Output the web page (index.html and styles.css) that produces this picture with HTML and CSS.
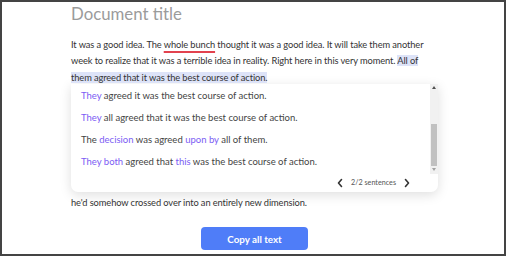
FILE: index.html
```html
<!DOCTYPE html>
<html lang="en">
<head>
    <meta charset="UTF-8">
    <meta name="viewport" content="width=device-width, initial-scale=1.0">
    <title>Document title</title>
    <link rel="stylesheet" href="styles.css">
</head>
<body>
    <div class="frame">
        <div class="doc">
            <h1 class="doc-title">Document title</h1>
            <p class="doc-text">It was a good idea. The <span class="misspelled">whole bunch</span> thought it was a good idea. It will take them another<br>week to realize that it was a terrible idea in reality. Right here in this very moment. <span class="selected">All of<br>them agreed that it was the best course of action.</span></p>

            <div class="suggestions">
                <div class="suggestion-body">
                    <ul class="suggestion-list">
                        <li><span class="changed">They</span> agreed it was the best course of action.</li>
                        <li><span class="changed">They</span> all agreed that it was the best course of action.</li>
                        <li>The <span class="changed">decision</span> was agreed <span class="changed">upon by</span> all of them.</li>
                        <li><span class="changed">They both</span> agreed that <span class="changed">this</span> was the best course of action.</li>
                    </ul>
                    <div class="scrollbar">
                        <span class="arrow up"></span>
                        <div class="track"><div class="thumb"></div></div>
                        <span class="arrow down"></span>
                    </div>
                </div>
                <div class="suggestion-footer">
                    <svg class="chevron" width="8" height="10" viewBox="0 0 8 10"><path d="M5.5 1.5 L2.5 5 L5.5 8.5" fill="none" stroke="#333" stroke-width="1.6" stroke-linecap="round" stroke-linejoin="round"/></svg>
                    <span class="pager">2/2 sentences</span>
                    <svg class="chevron" width="8" height="10" viewBox="0 0 8 10"><path d="M2.5 1.5 L5.5 5 L2.5 8.5" fill="none" stroke="#333" stroke-width="1.6" stroke-linecap="round" stroke-linejoin="round"/></svg>
                </div>
            </div>

            <p class="doc-text last">he'd somehow crossed over into an entirely new dimension.</p>

            <div class="actions">
                <button class="copy-button">Copy all text</button>
            </div>
        </div>
    </div>
</body>
</html>
```

FILE: styles.css
```css
body {
    margin: 0;
    font-family: 'Lato', 'Noto Sans', sans-serif;
    background: #fff;
}
.frame {
    width: 506px;
    height: 256px;
    box-sizing: border-box;
    border: 2px solid #444;
    overflow: hidden;
}
.doc {
    width: 367px;
    margin: 0 0 0 69px;
}
.doc-title {
    margin: 1px 0 0;
    font-size: 16.8px;
    font-weight: 400;
    color: #9b9b9b;
    line-height: 22px;
}
.doc-text {
    margin: 12px 0 0;
    font-size: 9.3px;
    letter-spacing: -0.1px;
    line-height: 16.3px;
    color: #333;
    white-space: nowrap;
}
.misspelled {
    text-decoration: underline;
    text-decoration-color: #e2424e;
    text-decoration-thickness: 1.5px;
    text-underline-offset: 3px;
}
.selected {
    background: #dde3f8;
}
.suggestions {
    margin-top: -2px;
    background: #fff;
    border-radius: 0 0 7px 7px;
    box-shadow: 0 3px 12px rgba(0, 0, 0, 0.13);
}
.suggestion-body {
    display: flex;
    height: 90px;
}
.suggestion-list {
    flex: 1;
    list-style: none;
    margin: 0;
    padding: 1px 0 0 10px;
}
.suggestion-list li {
    height: 22px;
    line-height: 22px;
    font-size: 9.5px;
    color: #444;
    white-space: nowrap;
}
.changed {
    color: #7c5cf4;
}
.scrollbar {
    width: 8px;
    display: flex;
    flex-direction: column;
    background: #f1f1f1;
}
.arrow {
    height: 8px;
    display: flex;
    align-items: center;
    justify-content: center;
}
.arrow::before {
    content: '';
    border-left: 2.5px solid transparent;
    border-right: 2.5px solid transparent;
}
.arrow.up::before {
    border-bottom: 3px solid #505050;
}
.arrow.down::before {
    border-top: 3px solid #a3a3a3;
}
.track {
    flex: 1;
    display: flex;
    flex-direction: column;
    justify-content: flex-end;
}
.thumb {
    height: 42px;
    margin: 0 1px;
    background: #c1c1c1;
}
.suggestion-footer {
    height: 18px;
    display: flex;
    align-items: center;
    justify-content: flex-end;
    gap: 3px;
    padding-right: 27px;
}
.pager {
    font-size: 7.2px;
    color: #555;
    margin: 0 4px;
}
.chevron {
    display: block;
}
.doc-text.last {
    margin-top: 3px;
}
.actions {
    display: flex;
    justify-content: center;
    margin-top: 16px;
}
.copy-button {
    width: 107px;
    height: 23px;
    border: none;
    border-radius: 4px;
    background: #4f7df8;
    color: #fff;
    font-family: 'Lato', 'Noto Sans', sans-serif;
    font-size: 9.8px;
    font-weight: 700;
    cursor: pointer;
}
```
